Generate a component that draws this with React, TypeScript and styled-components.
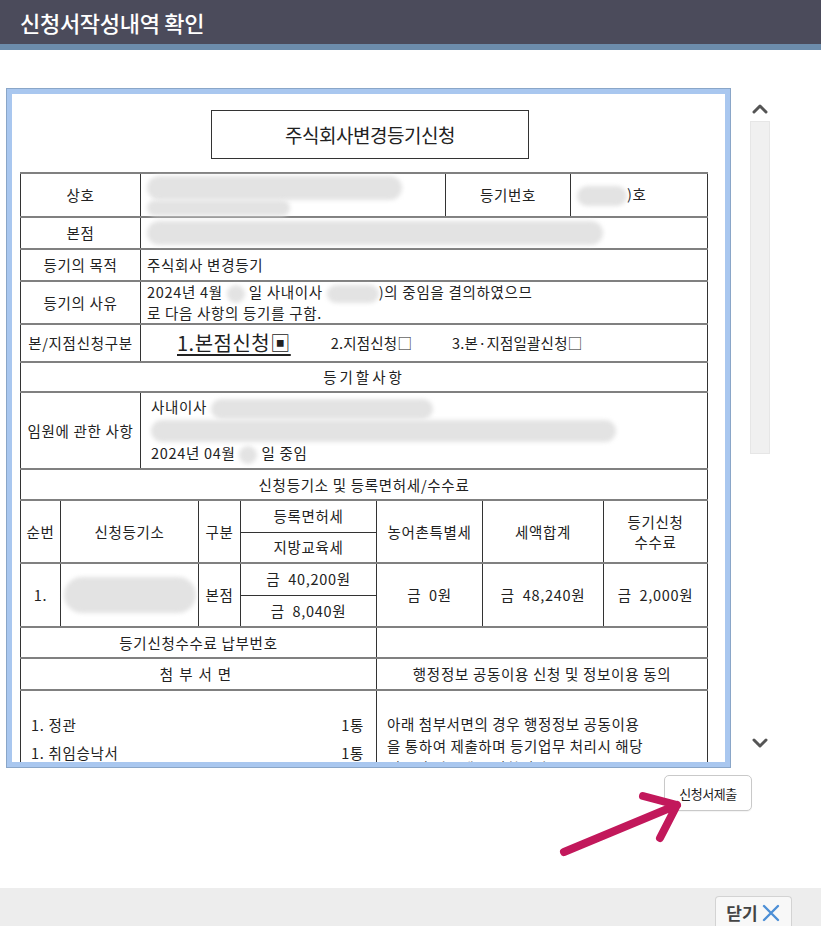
import React from 'react'
import styled, { createGlobalStyle } from 'styled-components'

const GlobalStyle = createGlobalStyle`
    html, body {
        margin:0;
        padding:0;
        background:#fff;
    }
    body {
        font-family:"Noto Sans CJK KR", "Noto Sans", sans-serif;
        color:#222;
    }
`

const Page = styled.div`
    position:relative;
    width:821px;
    height:926px;
    overflow:hidden;
    display:flex;
    flex-direction:column;
`
const Header = styled.header`
    height:44px;
    background:#4b4b5b;
    border-bottom:6px solid #6c8cab;
    display:flex;
    align-items:center;
    padding-left:20px;
    color:#fff;
    font-size:22px;
    font-weight:500;
    letter-spacing:-0.3px;
`
const Body = styled.div`
    display:flex;
    margin-top:39px;
    padding-left:7px;
`
const DocFrame = styled.div`
    width:700px;
    height:652px;
    border:5px solid #a9c7ef;
    box-shadow:0 0 0 1px #8aa6c8;
    overflow:hidden;
    padding:16px 5px 0 8px;
    box-sizing:content-box;
    background:#fff;
`
const DocTitle = styled.div`
    width:316px;
    height:47px;
    margin:0 auto 13px;
    border:1px solid #333;
    display:flex;
    align-items:center;
    justify-content:center;
    font-size:19px;
    letter-spacing:-0.5px;
`
const Form = styled.table`
    width:687px;
    border-collapse:collapse;
    table-layout:fixed;
    font-size:14.5px;
    letter-spacing:0.7px;
`
const Row = styled.tr<{ $h: number }>`
    height:${p => p.$h}px;
`
const Cell = styled.td<{ $left?: boolean; $thin?: 'top' | 'bottom' }>`
    border-left:1px solid #333;
    border-right:1px solid #333;
    border-top:${p => (p.$thin === 'top' ? '1px solid #333' : '2px solid #808080')};
    border-bottom:${p => (p.$thin === 'bottom' ? '1px solid #333' : '2px solid #808080')};
    text-align:${p => (p.$left ? 'left' : 'center')};
    padding:0 ${p => (p.$left ? '6px' : '1px')};
    vertical-align:middle;
    line-height:20px;
    white-space:pre-wrap;
`
const TopCell = styled(Cell)<{ $pad: number }>`
    vertical-align:top;
    padding:${p => p.$pad}px 12px 0 10px;
`
const Blur = styled.span<{ $w: number; $h: number }>`
    display:inline-block;
    width:${p => p.$w}px;
    height:${p => p.$h}px;
    border-radius:${p => p.$h / 2}px;
    background:#e3e3e3;
    filter:blur(2px);
    vertical-align:middle;
`
const BlurStack = styled.div`
    display:flex;
    flex-direction:column;
    padding-top:2px;
`
const Choices = styled.div`
    display:flex;
    align-items:center;
    gap:40px;
    padding-left:30px;
    letter-spacing:0.2px;
`
const BigChoice = styled.span`
    font-size:20px;
    letter-spacing:0.5px;
    text-decoration:underline;
    text-underline-offset:3px;
`
const Lines = styled.div<{ $gap: number }>`
    display:flex;
    flex-direction:column;
    gap:${p => p.$gap}px;
    padding-left:4px;
`
const Spaced = styled.span<{ $ls: number }>`
    letter-spacing:${p => p.$ls}px;
`
const DocItem = styled.div`
    display:flex;
    justify-content:space-between;
    font-size:14.5px;
    line-height:28px;
`
const Consent = styled.div`
    font-size:14.5px;
    line-height:22px;
    letter-spacing:0.6px;
`
const ScrollTrack = styled.div`
    width:20px;
    height:678px;
    margin-left:20px;
    display:flex;
    flex-direction:column;
    align-items:center;
`
const ScrollRail = styled.div`
    width:20px;
    height:333px;
    margin-top:5px;
    background:#f0f0f0;
    border:1px solid #e6e6e6;
    box-sizing:border-box;
`
const ArrowBtn = styled.div<{ $top: number }>`
    margin-top:${p => p.$top}px;
    height:14px;
    display:flex;
    align-items:center;
`
const ActionRow = styled.div`
    display:flex;
    justify-content:flex-end;
    padding-right:69px;
    margin-top:8px;
`
const SubmitButton = styled.button`
    width:88px;
    height:36px;
    border:1px solid #c9c9c9;
    border-radius:5px;
    background:#fff;
    font-family:inherit;
    font-size:13px;
    color:#222;
    letter-spacing:-0.5px;
    box-shadow:0 1px 1px rgba(0,0,0,0.05);
`
const Footer = styled.footer`
    margin-top:auto;
    height:38px;
    background:#ededed;
    display:flex;
    justify-content:flex-end;
    align-items:flex-end;
    padding-right:29px;
`
const CloseButton = styled.button`
    width:77px;
    height:30px;
    border:1px solid #d3d3d3;
    border-bottom:none;
    border-radius:4px 4px 0 0;
    background:#f8f8f8;
    display:flex;
    align-items:center;
    justify-content:center;
    gap:3px;
    font-family:inherit;
    font-size:17px;
    font-weight:700;
    color:#444;
    padding:2px 0 0;
`
const Annotation = styled.svg`
    position:absolute;
    left:0;
    top:0;
    pointer-events:none;
`

const Chevron = ({ down }: { down?: boolean }) => (
    <svg width="18" height="12" viewBox="0 0 18 12">
        <path
            d={down ? 'M3 3 L9 9 L15 3' : 'M3 9 L9 3 L15 9'}
            fill="none"
            stroke="#555"
            strokeWidth="3"
            strokeLinecap="round"
            strokeLinejoin="round"
        />
    </svg>
)

const App = () => {
    return (
        <>
            <GlobalStyle />
            <Page>
                <Header>신청서작성내역 확인</Header>
                <Body>
                    <DocFrame>
                        <DocTitle>주식회사변경등기신청</DocTitle>
                        <Form>
                            <colgroup>
                                <col style={{ width: 40 }} />
                                <col style={{ width: 80 }} />
                                <col style={{ width: 58 }} />
                                <col style={{ width: 42 }} />
                                <col style={{ width: 136 }} />
                                <col style={{ width: 69 }} />
                                <col style={{ width: 37 }} />
                                <col style={{ width: 88 }} />
                                <col style={{ width: 33 }} />
                                <col style={{ width: 104 }} />
                            </colgroup>
                            <tbody>
                                <Row $h={43}>
                                    <Cell colSpan={2}>상호</Cell>
                                    <Cell colSpan={4} $left>
                                        <BlurStack>
                                            <Blur $w={255} $h={24} />
                                            <Blur $w={143} $h={16} />
                                        </BlurStack>
                                    </Cell>
                                    <Cell colSpan={2}>등기번호</Cell>
                                    <Cell colSpan={2} $left>
                                        <Blur $w={50} $h={20} />)호
                                    </Cell>
                                </Row>
                                <Row $h={32}>
                                    <Cell colSpan={2}>본점</Cell>
                                    <Cell colSpan={8} $left>
                                        <Blur $w={456} $h={24} />
                                    </Cell>
                                </Row>
                                <Row $h={32}>
                                    <Cell colSpan={2}>등기의 목적</Cell>
                                    <Cell colSpan={8} $left>주식회사 변경등기</Cell>
                                </Row>
                                <Row $h={43}>
                                    <Cell colSpan={2}>등기의 사유</Cell>
                                    <Cell colSpan={8} $left>
                                        2024년 4월 <Blur $w={18} $h={18} /> 일 사내이사 <Blur $w={52} $h={18} />)의 중임을 결의하였으므
                                        <br />로 다음 사항의 등기를 구함.
                                    </Cell>
                                </Row>
                                <Row $h={38}>
                                    <Cell colSpan={2}>본/지점신청구분</Cell>
                                    <Cell colSpan={8} $left>
                                        <Choices>
                                            <BigChoice>1.본점신청▣</BigChoice>
                                            <span>2.지점신청□</span>
                                            <span>3.본·지점일괄신청□</span>
                                        </Choices>
                                    </Cell>
                                </Row>
                                <Row $h={30}>
                                    <Cell colSpan={10}>
                                        <Spaced $ls={3}>등기할사항</Spaced>
                                    </Cell>
                                </Row>
                                <Row $h={77}>
                                    <Cell colSpan={2}>임원에 관한 사항</Cell>
                                    <Cell colSpan={8} $left>
                                        <Lines $gap={1}>
                                            <span>
                                                사내이사 <Blur $w={222} $h={20} />
                                            </span>
                                            <Blur $w={465} $h={22} />
                                            <span>
                                                2024년 04월 <Blur $w={18} $h={18} /> 일 중임
                                            </span>
                                        </Lines>
                                    </Cell>
                                </Row>
                                <Row $h={31}>
                                    <Cell colSpan={10}>신청등기소 및 등록면허세/수수료</Cell>
                                </Row>
                                <Row $h={32}>
                                    <Cell rowSpan={2}>순번</Cell>
                                    <Cell colSpan={2} rowSpan={2}>신청등기소</Cell>
                                    <Cell rowSpan={2}>구분</Cell>
                                    <Cell $thin="bottom">등록면허세</Cell>
                                    <Cell colSpan={2} rowSpan={2}>농어촌특별세</Cell>
                                    <Cell colSpan={2} rowSpan={2}>세액합계</Cell>
                                    <Cell rowSpan={2}>
                                        등기신청
                                        <br />
                                        수수료
                                    </Cell>
                                </Row>
                                <Row $h={31}>
                                    <Cell $thin="top">지방교육세</Cell>
                                </Row>
                                <Row $h={32}>
                                    <Cell rowSpan={2}>1.</Cell>
                                    <Cell colSpan={2} rowSpan={2}>
                                        <Blur $w={132} $h={36} />
                                    </Cell>
                                    <Cell rowSpan={2}>본점</Cell>
                                    <Cell $thin="bottom">{'금  40,200원'}</Cell>
                                    <Cell colSpan={2} rowSpan={2}>{'금  0원'}</Cell>
                                    <Cell colSpan={2} rowSpan={2}>{'금  48,240원'}</Cell>
                                    <Cell rowSpan={2}>{'금  2,000원'}</Cell>
                                </Row>
                                <Row $h={32}>
                                    <Cell $thin="top">{'금  8,040원'}</Cell>
                                </Row>
                                <Row $h={31}>
                                    <Cell colSpan={5}>등기신청수수료 납부번호</Cell>
                                    <Cell colSpan={5} />
                                </Row>
                                <Row $h={32}>
                                    <Cell colSpan={5}>
                                        <Spaced $ls={6}>첨부서면</Spaced>
                                    </Cell>
                                    <Cell colSpan={5}>행정정보 공동이용 신청 및 정보이용 동의</Cell>
                                </Row>
                                <Row $h={140}>
                                    <TopCell colSpan={5} $left $pad={20}>
                                        <DocItem>
                                            <span>1. 정관</span>
                                            <span>1통</span>
                                        </DocItem>
                                        <DocItem>
                                            <span>1. 취임승낙서</span>
                                            <span>1통</span>
                                        </DocItem>
                                    </TopCell>
                                    <TopCell colSpan={5} $left $pad={22}>
                                        <Consent>
                                            아래 첨부서면의 경우 행정정보 공동이용
                                            <br />을 통하여 제출하며 등기업무 처리시 해당
                                            <br />정보의 이용에 동의합니다.
                                        </Consent>
                                    </TopCell>
                                </Row>
                            </tbody>
                        </Form>
                    </DocFrame>
                    <ScrollTrack>
                        <ArrowBtn $top={13}>
                            <Chevron />
                        </ArrowBtn>
                        <ScrollRail />
                        <ArrowBtn $top={282}>
                            <Chevron down />
                        </ArrowBtn>
                    </ScrollTrack>
                </Body>
                <ActionRow>
                    <SubmitButton>신청서제출</SubmitButton>
                </ActionRow>
                <Footer>
                    <CloseButton>
                        닫기
                        <svg width="20" height="20" viewBox="0 0 20 20">
                            <path d="M3 3 L17 17 M17 3 L3 17" stroke="#4d8fd6" strokeWidth="2.4" strokeLinecap="round" />
                        </svg>
                    </CloseButton>
                </Footer>
                <Annotation width="821" height="926" viewBox="0 0 821 926">
                    <path
                        d="M564 852 L677 805 M643 796 L677 805 L660 838"
                        fill="none"
                        stroke="#c2185b"
                        strokeWidth="8"
                        strokeLinecap="round"
                        strokeLinejoin="round"
                    />
                </Annotation>
            </Page>
        </>
    )
}

export default App
